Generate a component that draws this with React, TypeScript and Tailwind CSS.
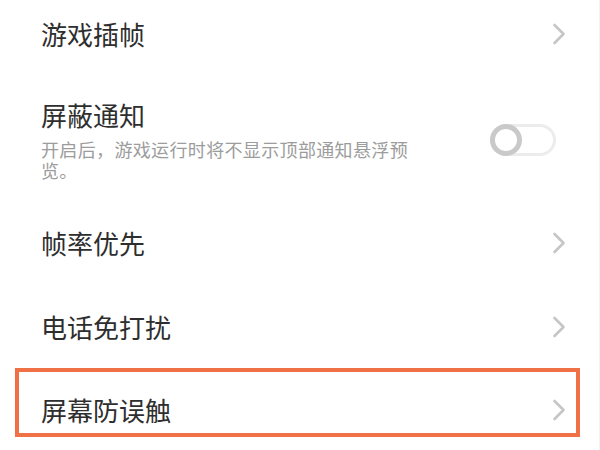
import React from 'react';

const Chevron = () => (
  <svg width="14" height="22" viewBox="0 0 14 22" fill="none" className="shrink-0">
    <polyline points="2.5,2 11.5,11 2.5,20" stroke="#c6c6c6" strokeWidth="2.6" strokeLinecap="round" strokeLinejoin="round" />
  </svg>
);

const Toggle = () => (
  <div className="relative w-[66px] h-[32px] shrink-0 mr-[10px]">
    <div className="absolute inset-0 rounded-full border-[3px] border-[#ececec] bg-white" />
    <div className="absolute left-0 top-0 w-[32px] h-[32px] rounded-full border-[5px] border-[#c9c9c9] bg-white" />
  </div>
);

const LinkRow = ({ title, h }: { title: string; h: string }) => (
  <div className={`flex items-center justify-between ${h}`}>
    <span className="text-[26px] leading-[32px] text-[#2e2e2e]">{title}</span>
    <Chevron />
  </div>
);

export default function App() {
  return (
    <div
      className="relative w-[600px] h-[450px] overflow-hidden bg-white border-r border-[#f3f3f3]"
      style={{ fontFamily: '"Noto Sans CJK SC", "Noto Sans", sans-serif' }}
    >
      <div className="flex flex-col pl-[41px] pr-[33px]">
        <LinkRow title="游戏插帧" h="h-[67px]" />

        <div className="flex items-center justify-between pt-[32px] pb-[20px]">
          <div className="flex flex-col gap-[8px]">
            <span className="text-[26px] leading-[32px] text-[#2e2e2e]">屏蔽通知</span>
            <p className="w-[375px] text-[18px] leading-[21px] tracking-[0.35px] text-[#9c9c9c]">
              开启后，游戏运行时将不显示顶部通知悬浮预览。
            </p>
          </div>
          <Toggle />
        </div>

        <LinkRow title="帧率优先" h="h-[84px]" />
        <LinkRow title="电话免打扰" h="h-[83px]" />
        <LinkRow title="屏幕防误触" h="h-[84px]" />
      </div>

      <div className="absolute left-[15px] top-[368px] w-[565px] h-[69px] border-[4.5px] border-[#f07145]" />
    </div>
  );
}
